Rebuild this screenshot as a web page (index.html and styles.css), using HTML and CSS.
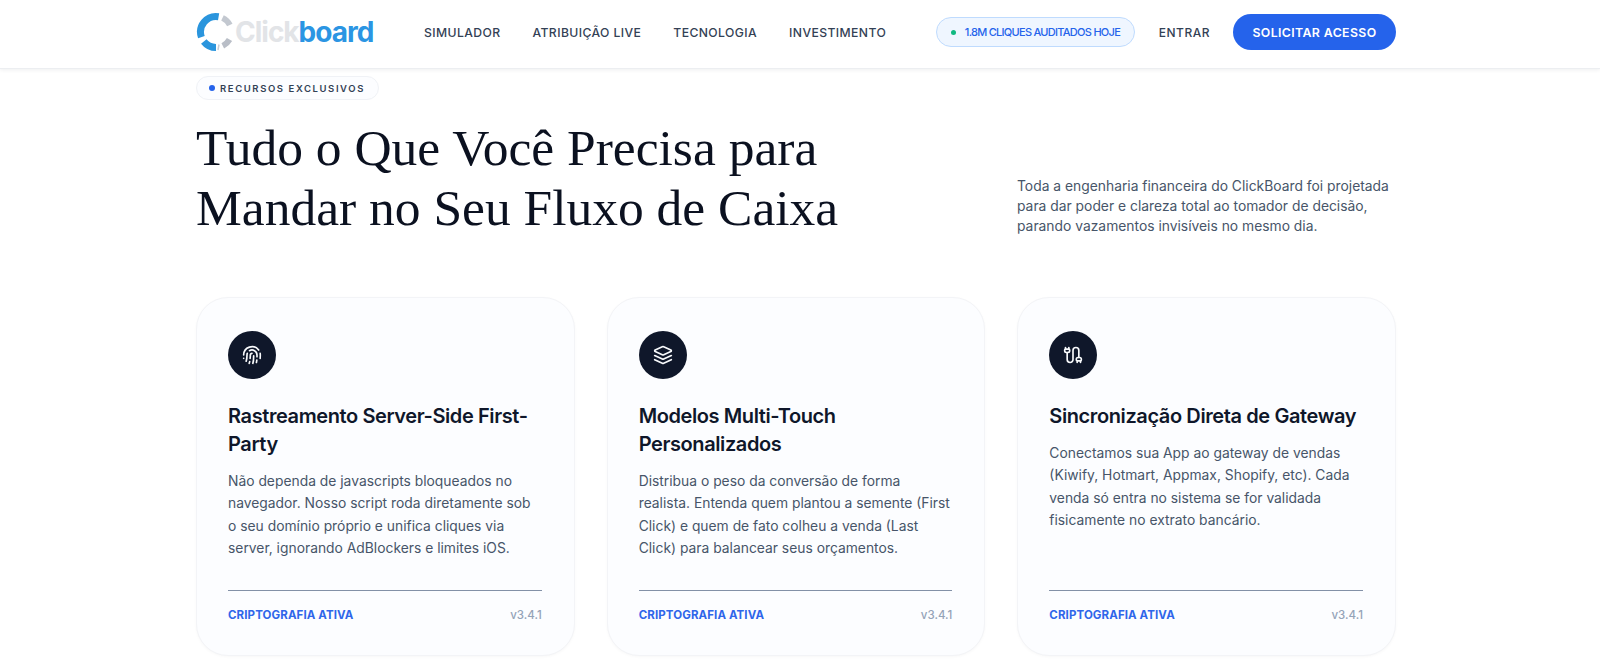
FILE: index.html
```html
<!DOCTYPE html>
<html lang="pt-BR">
<head>
<meta charset="utf-8">
<title>ClickBoard</title>
<link rel="stylesheet" href="styles.css">
</head>
<body>
<header class="topbar">
  <div class="wrap topbar-row">
    <a class="logo" href="#">
      <svg class="logo-mark" viewBox="0 0 40 40" width="40" height="40" fill="none">
        <path d="M22.6 4.7A15.5 15.5 0 0 0 5.4 25.1" stroke="#2a95dd" stroke-width="7"/>
        <path d="M7.8 29.5A15.5 15.5 0 0 0 20 35.5" stroke="#2a95dd" stroke-width="7"/>
        <path d="M26.5 5.9A15.5 15.5 0 0 1 33.8 13" stroke="#c3c8d0" stroke-width="6"/>
        <path d="M33.5 27.6A15.5 15.5 0 0 1 26.8 33.9" stroke="#b9bec7" stroke-width="6"/>
        <path d="M23 32.5L22 38" stroke="#c9cdd4" stroke-width="1.5"/>
      </svg>
      <span class="logo-text"><span class="logo-light">Click</span><span class="logo-blue">board</span></span>
    </a>
    <nav class="nav">
      <a href="#">SIMULADOR</a>
      <a href="#">ATRIBUIÇÃO LIVE</a>
      <a href="#">TECNOLOGIA</a>
      <a href="#">INVESTIMENTO</a>
    </nav>
    <div class="actions">
      <span class="live"><i class="live-dot"></i>1.8M CLIQUES AUDITADOS HOJE</span>
      <a class="login" href="#">ENTRAR</a>
      <a class="cta" href="#">SOLICITAR ACESSO</a>
    </div>
  </div>
</header>
<main class="wrap">
  <div class="tag"><i class="tag-dot"></i>RECURSOS EXCLUSIVOS</div>
  <div class="intro">
    <h1>Tudo o Que Você Precisa para<br>Mandar no Seu Fluxo de Caixa</h1>
    <p>Toda a engenharia financeira do ClickBoard foi projetada para dar poder e clareza total ao tomador de decisão, parando vazamentos invisíveis no mesmo dia.</p>
  </div>
  <section class="cards">
    <article class="card">
      <div class="badge">
        <svg viewBox="0 0 24 24" width="20" height="20"><path d="M12 10a2 2 0 0 0-2 2c0 1.02-.1 2.51-.26 4"/><path d="M14 13.12c0 2.38 0 6.38-1 8.88"/><path d="M17.29 21.02c.12-.6.43-2.3.5-3.02"/><path d="M2 12a10 10 0 0 1 18-6"/><path d="M2 16h.01"/><path d="M21.8 16c.2-2 .131-5.354 0-6"/><path d="M5 19.5C5.5 18 6 15 6 12a6 6 0 0 1 .34-2"/><path d="M8.65 22c.21-.66.45-1.32.57-2"/><path d="M9 6.8a6 6 0 0 1 9 5.2v2"/></svg>
      </div>
      <h2>Rastreamento Server-Side First-Party</h2>
      <p>Não dependa de javascripts bloqueados no navegador. Nosso script roda diretamente sob o seu domínio próprio e unifica cliques via server, ignorando AdBlockers e limites iOS.</p>
      <footer class="card-foot"><span class="foot-label">CRIPTOGRAFIA ATIVA</span><span class="foot-ver">v3.4.1</span></footer>
    </article>
    <article class="card">
      <div class="badge">
        <svg viewBox="0 0 24 24" width="20" height="20"><path d="m12.83 2.18a2 2 0 0 0-1.66 0L2.6 6.08a1 1 0 0 0 0 1.83l8.58 3.91a2 2 0 0 0 1.66 0l8.58-3.9a1 1 0 0 0 0-1.83Z"/><path d="m22 17.65-9.17 4.16a2 2 0 0 1-1.66 0L2 17.65"/><path d="m22 12.65-9.17 4.16a2 2 0 0 1-1.66 0L2 12.65"/></svg>
      </div>
      <h2>Modelos Multi-Touch Personalizados</h2>
      <p>Distribua o peso da conversão de forma realista. Entenda quem plantou a semente (First Click) e quem de fato colheu a venda (Last Click) para balancear seus orçamentos.</p>
      <footer class="card-foot"><span class="foot-label">CRIPTOGRAFIA ATIVA</span><span class="foot-ver">v3.4.1</span></footer>
    </article>
    <article class="card">
      <div class="badge">
        <svg viewBox="0 0 24 24" width="20" height="20"><path d="M17 21v-2a1 1 0 0 1-1-1v-1a2 2 0 0 1 2-2h2a2 2 0 0 1 2 2v1a1 1 0 0 1-1 1"/><path d="M19 15V6.5a1 1 0 0 0-7 0v11a1 1 0 0 1-7 0V9"/><path d="M21 21v-2h-4"/><path d="M3 5h4V3"/><path d="M7 5a1 1 0 0 1 1 1v1a2 2 0 0 1-2 2H4a2 2 0 0 1-2-2V6a1 1 0 0 1 1-1V3"/></svg>
      </div>
      <h2>Sincronização Direta de Gateway</h2>
      <p>Conectamos sua App ao gateway de vendas (Kiwify, Hotmart, Appmax, Shopify, etc). Cada venda só entra no sistema se for validada fisicamente no extrato bancário.</p>
      <footer class="card-foot"><span class="foot-label">CRIPTOGRAFIA ATIVA</span><span class="foot-ver">v3.4.1</span></footer>
    </article>
  </section>
</main>
</body>
</html>
```
FILE: styles.css
```css
* { box-sizing: border-box; }
html, body { margin: 0; height: 668px; overflow: hidden; background: #fff; }
body { padding-right: 8px; font-family: Inter, "Liberation Sans", sans-serif; color: #0f172a; }
a { text-decoration: none; color: inherit; }
.wrap { width: 1200px; margin: 0 auto; }

.topbar { height: 69px; margin-right: -8px; padding-right: 8px; background: #fff; border-bottom: 1px solid #eceef1; box-shadow: 0 1px 4px rgba(15, 23, 42, .07); }
.topbar-row { height: 64px; display: flex; align-items: center; }
.logo { width: 228px; display: flex; align-items: center; }
.logo-mark { flex: none; margin-right: -1px; }
.logo-text { font-size: 28px; font-weight: 700; letter-spacing: -1px; line-height: 40px; }
.logo-light { color: #e2e4e7; }
.logo-blue { color: #2b95e3; }
.nav { display: flex; gap: 32px; font-size: 12.2px; font-weight: 500; letter-spacing: .4px; color: #334155; }
.actions { margin-left: auto; display: flex; align-items: center; }
.live { height: 30px; width: 199px; display: flex; align-items: center; padding-left: 14px; border: 1px solid #bfdbfe; border-radius: 15px; background: #eff6ff; color: #2563eb; font-size: 11px; font-weight: 500; letter-spacing: -.72px; margin-right: 24px; }
.live-dot { width: 5px; height: 5px; border-radius: 50%; background: #10b981; margin-right: 9px; }
.login { font-size: 12px; font-weight: 500; letter-spacing: .5px; color: #334155; margin-right: 23px; }
.cta { width: 163px; height: 36px; border-radius: 18px; background: #2563eb; color: #fff; font-size: 12.3px; font-weight: 600; letter-spacing: .4px; display: flex; align-items: center; justify-content: center; }

.tag { width: 183px; height: 24px; margin-top: 7px; display: flex; align-items: center; padding-left: 12px; border: 1px solid #f0f2f6; border-radius: 12px; background: #fcfdff; font-size: 9.5px; font-weight: 600; letter-spacing: 1.6px; color: #334155; }
.tag-dot { width: 6px; height: 6px; border-radius: 50%; background: #2563eb; margin-right: 5px; }

.intro { display: flex; align-items: flex-end; justify-content: space-between; margin-top: 18px; }
.intro h1 { margin: 0; font-family: "Liberation Serif", "DejaVu Serif", serif; font-weight: 400; font-size: 51.5px; line-height: 60px; color: #0b1120; }
.intro p { width: 379px; margin: 0 0 2px; font-size: 13.85px; line-height: 20px; color: #475569; }

.cards { display: grid; grid-template-columns: repeat(3, 1fr); gap: 32px; margin-top: 59px; }
.card { height: 359px; padding: 33px 32px 0 31px; display: flex; flex-direction: column; background: #fcfdff; border: 1px solid #f3f4f7; border-radius: 32px; box-shadow: 0 1px 3px rgba(15, 23, 42, .03); }
.badge { width: 48px; height: 48px; flex: none; border-radius: 50%; background: #0f172a; display: flex; align-items: center; justify-content: center; }
.badge svg { fill: none; stroke: #f8fafc; stroke-width: 2; stroke-linecap: round; stroke-linejoin: round; }
.card h2 { margin: 22.5px 0 0; font-size: 20px; font-weight: 600; line-height: 28px; letter-spacing: -.4px; color: #0f172a; }
.card p { margin: 12.5px 0 0; font-size: 13.85px; line-height: 22.4px; color: #475569; }
.card-foot { margin-top: auto; margin-bottom: 32px; height: 33px; padding-top: 16px; border-top: 1px solid #8391a7; display: flex; justify-content: space-between; align-items: flex-start; font-size: 11.5px; line-height: 16px; }
.foot-label { font-weight: 700; color: #2f66ea; letter-spacing: .1px; }
.foot-ver { font-size: 11.5px; font-weight: 500; color: #94a3b8; }
```
